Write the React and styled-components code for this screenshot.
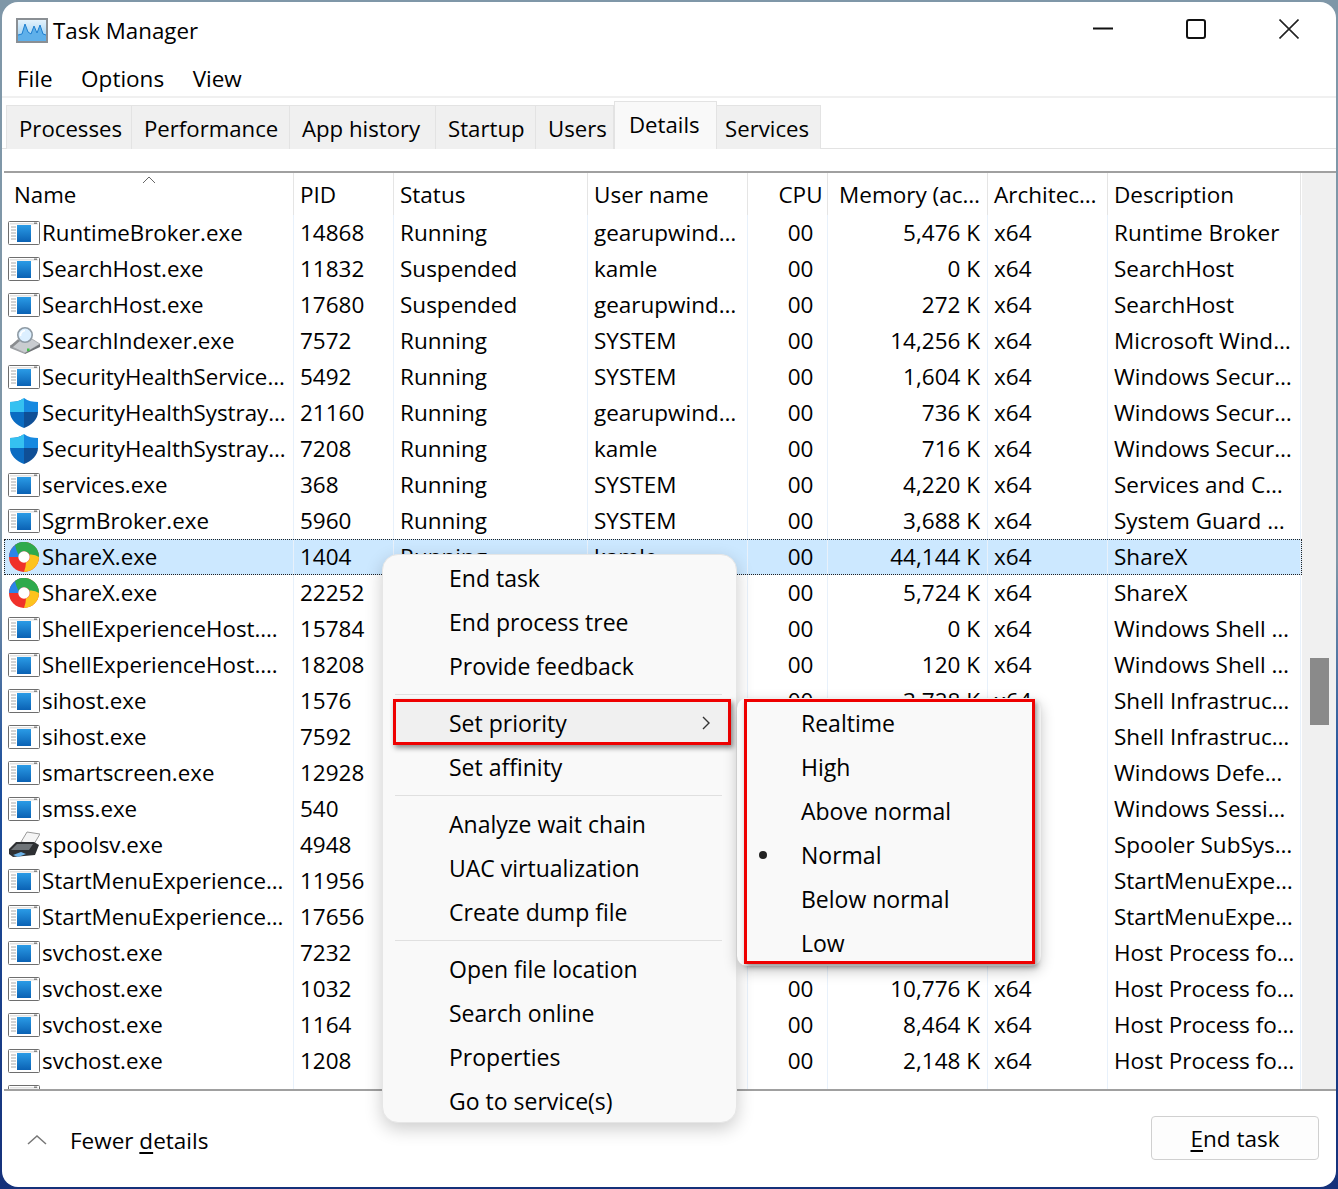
import styled, { createGlobalStyle } from "styled-components";

const GlobalStyle = createGlobalStyle`
  html, body {
    margin: 0;
    padding: 0;
    height: 1189px;
    overflow: hidden;
  }
  body {
    background: linear-gradient(180deg, #7f97a8 0, #7f97a8 560px, #1d4f9c 780px, #15317a 100%);
    font-family: "Open Sans", "Noto Sans", sans-serif;
    font-size: 22.5px;
    color: #000;
  }
  u { text-underline-offset: 3px; }
`;

const Page = styled.div`
  position: relative;
  box-sizing: border-box;
  width: 1338px;
  height: 1189px;
  padding: 2px;
`;

const Window = styled.div`
  display: flex;
  flex-direction: column;
  height: 1185px;
  background: #fff;
  border-radius: 16px;
  overflow: hidden;
`;

const TitleBar = styled.div`
  display: flex;
  align-items: center;
  height: 58px;
  margin-bottom: 2px;
  padding-left: 14px;
  gap: 5px;
  font-size: 22.3px;
`;

const TitleText = styled.span`
  flex: 1;
  padding-bottom: 2px;
`;

const WinControls = styled.div`
  display: flex;
  align-items: center;
  margin-right: 1px;
  padding-bottom: 4px;
`;

const WinButton = styled.div`
  display: flex;
  justify-content: center;
  width: 93px;
`;

const MenuBar = styled.div`
  display: flex;
  height: 36px;
  align-items: center;
  padding: 0 0 2px 15px;
  box-sizing: border-box;
  gap: 28.5px;
  border-bottom: 2px solid #f0f0f0;
`;

const TabStrip = styled.div`
  display: flex;
  align-items: flex-end;
  height: 50px;
  padding-left: 4px;
  border-bottom: 1px solid #e3e3e3;
  font-size: 22.2px;
`;

const Tab = styled.div`
  box-sizing: border-box;
  width: ${(p) => p.$w}px;
  height: ${(p) => (p.$active ? 48 : 44)}px;
  display: flex;
  align-items: center;
  padding: ${(p) => (p.$active ? 0 : 2)}px 0 ${(p) => (p.$active ? 2 : 0)}px ${(p) => p.$pad}px;
  background: ${(p) => (p.$active ? "#f9f9f9" : "#f0f0f0")};
  border: 1px solid #e3e3e3;
  border-left-width: ${(p) => (p.$first || p.$active ? 1 : 0)}px;
  border-bottom: 0;
  margin-bottom: -1px;
  white-space: nowrap;
`;

const Spacer = styled.div`
  height: 22px;
`;

const TableArea = styled.div`
  display: flex;
  height: 916px;
  margin-left: 2px;
  border-top: 2px solid #a0a0a0;
  border-bottom: 2px solid #a0a0a0;
  overflow: hidden;
`;

const List = styled.div`
  width: 1298px;
  flex-shrink: 0;
`;

const COLUMNS = "290px 100px 194px 160px 80px 160px 120px 193px";

const HeaderRow = styled.div`
  position: relative;
  display: grid;
  grid-template-columns: ${COLUMNS};
  height: 42px;
`;

const Row = styled.div`
  display: grid;
  grid-template-columns: ${COLUMNS};
  height: 36px;
  background: ${(p) => (p.$selected ? "#cce8ff" : "transparent")};
  outline: ${(p) => (p.$selected ? "1px dotted #222" : "none")};
  outline-offset: -1px;
`;

const Cell = styled.div`
  display: flex;
  align-items: center;
  box-sizing: border-box;
  padding: 0 ${(p) => p.$right ?? 5}px ${(p) => (p.$head ? 0 : 2)}px ${(p) => p.$left ?? 6}px;
  justify-content: ${(p) =>
    p.$align === "right" ? "flex-end" : p.$align === "center" ? "center" : "flex-start"};
  border-right: 1px solid ${(p) => (p.$head ? "#e5e5e5" : "#e8f1fb")};
  white-space: nowrap;
  overflow: hidden;
`;

const NameCell = styled(Cell)`
  padding-left: ${(p) => (p.$head ? 10 : 4)}px;
  gap: 2px;
  font-size: 22.3px;
`;

const NameIcon = styled.span`
  display: flex;
  width: 32px;
  flex-shrink: 0;
  margin-top: 1px;
`;

const SortMark = styled.svg`
  position: absolute;
  left: 138px;
  top: 3px;
`;

const Track = styled.div`
  flex: 1;
  background: #f0f0f0;
  padding-left: 8px;
`;

const Thumb = styled.div`
  width: 19px;
  height: 67px;
  margin-top: 485px;
  background: #8a8a8a;
`;

const Footer = styled.div`
  flex: 1;
  display: flex;
  align-items: center;
  padding: 0 17px 0 25px;
`;

const Fewer = styled.div`
  flex: 1;
  display: flex;
  align-items: center;
  gap: 23px;
  padding-top: 2px;
`;

const EndButton = styled.div`
  box-sizing: border-box;
  width: 168px;
  height: 44px;
  margin-bottom: 2px;
  display: flex;
  align-items: center;
  justify-content: center;
  background: #fdfdfd;
  border: 1px solid #d0d0d0;
  border-radius: 4px;
`;

const ContextMenu = styled.div`
  position: absolute;
  left: 382px;
  top: 554px;
  box-sizing: border-box;
  width: 355px;
  height: 569px;
  padding-top: 3px;
  background: #f9f9f9;
  border: 1px solid #e6e6e6;
  border-radius: 16px;
  box-shadow: 0 6px 18px rgba(0, 0, 0, 0.2);
  font-size: 23px;
`;

const Item = styled.div`
  display: flex;
  align-items: center;
  box-sizing: border-box;
  height: 44px;
  padding: 0 0 4px 66px;
  white-space: nowrap;
`;

const Sep = styled.div`
  height: 1px;
  margin: 4px 14px 8px 12px;
  background: #e0e0e0;
`;

const PriorityItem = styled.div`
  box-sizing: border-box;
  display: flex;
  align-items: center;
  justify-content: space-between;
  width: 338px;
  height: 46px;
  margin: -4px 0 2px 10px;
  padding: 2px 17px 0 53px;
  background: #f0f0f0;
  border: 3px solid #ee0000;
  box-shadow: 2px 3px 5px rgba(0, 0, 0, 0.45);
`;

const SubMenu = styled.div`
  position: absolute;
  left: 737px;
  top: 698px;
  box-sizing: border-box;
  width: 304px;
  height: 268px;
  padding: 1px 6px 0 7px;
  background: #f9f9f9;
  border-radius: 10px;
  box-shadow: 0 5px 14px rgba(0, 0, 0, 0.22);
  font-size: 23px;
`;

const SubBox = styled.div`
  box-sizing: border-box;
  height: 265px;
  border: 3px solid #ee0000;
  box-shadow: 2px 3px 5px rgba(0, 0, 0, 0.4);
`;

const SubItem = styled.div`
  display: flex;
  align-items: center;
  box-sizing: border-box;
  height: 44px;
  padding: 0 0 2px 12px;
`;

const BulletSlot = styled.div`
  width: 42px;
  display: flex;
`;

const Bullet = styled.div`
  width: 8px;
  height: 8px;
  border-radius: 50%;
  background: #222;
`;

const TaskManagerIcon = () => (
  <svg width="32" height="26" viewBox="0 0 32 26">
    <defs>
      <linearGradient id="tm" x1="0" y1="0" x2="0" y2="1">
        <stop offset="0" stopColor="#e8f4fc" />
        <stop offset="1" stopColor="#8cc8f0" />
      </linearGradient>
    </defs>
    <rect x="1" y="1" width="30" height="23" fill="url(#tm)" stroke="#8a8f94" strokeWidth="2" />
    <path d="M2 17 L6 16 L9 6 L12 14 L15 16 L18 8 L21 15 L24 7 L27 16 L30 17 V23 H2 Z" fill="#5fb0ea" />
    <path d="M2 17 L6 16 L9 6 L12 14 L15 16 L18 8 L21 15 L24 7 L27 16 L30 17" fill="none" stroke="#1e7fd0" strokeWidth="1" />
  </svg>
);

const AppIcon = () => (
  <svg width="32" height="24" viewBox="0 0 32 24">
    <defs>
      <linearGradient id="app" x1="0" y1="0" x2="0" y2="1">
        <stop offset="0" stopColor="#2a9be6" />
        <stop offset="1" stopColor="#0b62b4" />
      </linearGradient>
    </defs>
    <rect x="0.5" y="0.5" width="31" height="23" rx="1" fill="#fff" stroke="#6e6e6e" />
    <rect x="2" y="2" width="28" height="1.5" fill="#e2e2e2" />
    <rect x="26" y="1.5" width="3" height="1.5" fill="#888" />
    <path d="M3 6h5M3 9h5M3 12h5M3 15h5M3 18h5" stroke="#a8a8a8" strokeWidth="1" />
    <rect x="9" y="4" width="14" height="17" fill="url(#app)" />
  </svg>
);

const ShieldIcon = () => (
  <svg width="32" height="30" viewBox="0 0 32 30">
    <path d="M16 0 C12 3 7 4 2 4 V14 C2 21 8 27 16 30 V14 H2" fill="#0b6cc2" />
    <path d="M16 0 C12 3 7 4 2 4 V14 H16 Z" fill="#35c1f1" />
    <path d="M16 0 C20 3 25 4 30 4 V14 H16 Z" fill="#1689e0" />
    <path d="M16 14 H30 C30 21 24 27 16 30 Z" fill="#0f4f96" />
  </svg>
);

const ShareXIcon = () => (
  <svg width="32" height="30" viewBox="0 0 32 30">
    <g transform="translate(1 0)" fill="none" strokeWidth="10">
      <circle cx="15" cy="15" r="15" fill="#f0312a" stroke="none" />
      <path d="M15 0 A15 15 0 0 0 0 15 H9.5 A6 6 0 0 1 15 9 Z" fill="#2b84e8" stroke="none" />
      <path d="M6 3 A15 15 0 0 1 30 15 H21 A6 6 0 0 0 9.5 13 Q7 8 6 3 Z" fill="#2eaa4c" stroke="none" />
      <path d="M30 15 A15 15 0 0 1 15 30 Q17 24 17 20.5 A6 6 0 0 0 20.5 12.5 Q26 12 30 15 Z" fill="#fdc31e" stroke="none" />
      <circle cx="15" cy="15" r="5.7" fill="#fff" stroke="none" />
    </g>
  </svg>
);

const IndexerIcon = () => (
  <svg width="32" height="27" viewBox="0 0 32 27">
    <path d="M2 19 L15 12 H24 L32 17 L17 26 Z" fill="#c9ccd0" stroke="#8d9094" strokeWidth="0.6" />
    <path d="M17 26 L32 17 V20 L17 27 Z" fill="#6f7276" />
    <path d="M2 19 L17 26 V27 L2 21 Z" fill="#9b9ea2" />
    <rect x="19" y="21.5" width="2.5" height="2.6" fill="#43c04a" />
    <path d="M11 13 L3 20" stroke="#8a8c8f" strokeWidth="2.6" />
    <circle cx="17" cy="8" r="7.2" fill="#dcefff" stroke="#8e9aa4" strokeWidth="1.6" />
    <path d="M12.5 9 A5 5 0 0 1 17 3.5" fill="none" stroke="#fff" strokeWidth="1.6" />
  </svg>
);

const PrinterIcon = () => (
  <svg width="32" height="28" viewBox="0 0 32 28">
    <path d="M13 11 L19 1 L32 3 L26 13 Z" fill="#f5f5f5" stroke="#9a9a9a" />
    <path d="M1 18 L8 11 H26 L31 14 L27 24 L5 26 L1 23 Z" fill="#2e3033" />
    <path d="M3 19 L9 13 H25 L21 19 Z" fill="#6f7478" />
    <path d="M5 24 L13 21 L18 23 L10 26 Z" fill="#6db3e8" />
  </svg>
);

const ICONS = {
  app: AppIcon,
  shield: ShieldIcon,
  sharex: ShareXIcon,
  indexer: IndexerIcon,
  printer: PrinterIcon,
};

const hostDesc = "Host Process fo…";

const ROWS = [
  ["app", "RuntimeBroker.exe", "14868", "Running", "gearupwind…", "5,476 K", "Runtime Broker"],
  ["app", "SearchHost.exe", "11832", "Suspended", "kamle", "0 K", "SearchHost"],
  ["app", "SearchHost.exe", "17680", "Suspended", "gearupwind…", "272 K", "SearchHost"],
  ["indexer", "SearchIndexer.exe", "7572", "Running", "SYSTEM", "14,256 K", "Microsoft Wind…"],
  ["app", "SecurityHealthService…", "5492", "Running", "SYSTEM", "1,604 K", "Windows Secur…"],
  ["shield", "SecurityHealthSystray…", "21160", "Running", "gearupwind…", "736 K", "Windows Secur…"],
  ["shield", "SecurityHealthSystray…", "7208", "Running", "kamle", "716 K", "Windows Secur…"],
  ["app", "services.exe", "368", "Running", "SYSTEM", "4,220 K", "Services and C…"],
  ["app", "SgrmBroker.exe", "5960", "Running", "SYSTEM", "3,688 K", "System Guard …"],
  ["sharex", "ShareX.exe", "1404", "Running", "kamle", "44,144 K", "ShareX", true],
  ["sharex", "ShareX.exe", "22252", "Running", "kamle", "5,724 K", "ShareX"],
  ["app", "ShellExperienceHost.…", "15784", "Suspended", "kamle", "0 K", "Windows Shell …"],
  ["app", "ShellExperienceHost.…", "18208", "Suspended", "kamle", "120 K", "Windows Shell …"],
  ["app", "sihost.exe", "1576", "Running", "kamle", "3,728 K", "Shell Infrastruc…"],
  ["app", "sihost.exe", "7592", "Running", "kamle", "3,520 K", "Shell Infrastruc…"],
  ["app", "smartscreen.exe", "12928", "Running", "kamle", "1,204 K", "Windows Defe…"],
  ["app", "smss.exe", "540", "Running", "SYSTEM", "204 K", "Windows Sessi…"],
  ["printer", "spoolsv.exe", "4948", "Running", "SYSTEM", "2,892 K", "Spooler SubSys…"],
  ["app", "StartMenuExperience…", "11956", "Running", "gearupwind…", "9,120 K", "StartMenuExpe…"],
  ["app", "StartMenuExperience…", "17656", "Running", "kamle", "8,740 K", "StartMenuExpe…"],
  ["app", "svchost.exe", "7232", "Running", "SYSTEM", "1,316 K", hostDesc],
  ["app", "svchost.exe", "1032", "Running", "SYSTEM", "10,776 K", hostDesc],
  ["app", "svchost.exe", "1164", "Running", "SYSTEM", "8,464 K", hostDesc],
  ["app", "svchost.exe", "1208", "Running", "SYSTEM", "2,148 K", hostDesc],
  ["app", "svchost.exe", "1256", "Running", "SYSTEM", "996 K", hostDesc],
];

const TABS = [
  ["Processes", 126, 12],
  ["Performance", 158, 12],
  ["App history", 146, 12],
  ["Startup", 100, 12],
  ["Users", 78, 12],
  ["Details", 103, 14],
  ["Services", 104, 8],
];

const MENU_GROUPS = [
  ["End task", "End process tree", "Provide feedback"],
  ["Set priority", "Set affinity"],
  ["Analyze wait chain", "UAC virtualization", "Create dump file"],
  ["Open file location", "Search online", "Properties", "Go to service(s)"],
];

const PRIORITIES = ["Realtime", "High", "Above normal", "Normal", "Below normal", "Low"];

export default function App() {
  return (
    <Page>
      <GlobalStyle />
      <Window>
        <TitleBar>
          <TaskManagerIcon />
          <TitleText>Task Manager</TitleText>
          <WinControls>
            <WinButton>
              <svg width="20" height="20" viewBox="0 0 20 20">
                <path d="M0 9.5H20" stroke="#111" strokeWidth="2" />
              </svg>
            </WinButton>
            <WinButton>
              <svg width="20" height="20" viewBox="0 0 20 20">
                <rect x="1" y="1" width="18" height="18" rx="2" fill="none" stroke="#111" strokeWidth="2" />
              </svg>
            </WinButton>
            <WinButton>
              <svg width="20" height="20" viewBox="0 0 20 20">
                <path d="M0.5 0.5L19.5 19.5M19.5 0.5L0.5 19.5" stroke="#222" strokeWidth="1.6" />
              </svg>
            </WinButton>
          </WinControls>
        </TitleBar>
        <MenuBar>
          <span>File</span>
          <span>Options</span>
          <span>View</span>
        </MenuBar>
        <TabStrip>
          {TABS.map(([label, w, pad], i) => (
            <Tab key={label} $w={w} $pad={pad} $first={i === 0} $active={label === "Details"}>
              {label}
            </Tab>
          ))}
        </TabStrip>
        <Spacer />
        <TableArea>
          <List>
            <HeaderRow>
              <NameCell $head>Name</NameCell>
              <Cell $head>PID</Cell>
              <Cell $head>Status</Cell>
              <Cell $head>User name</Cell>
              <Cell $head $align="center" $left={26} $right={0}>CPU</Cell>
              <Cell $head $align="right" $right={7}>Memory (ac…</Cell>
              <Cell $head>Architec…</Cell>
              <Cell $head>Description</Cell>
              <SortMark width="14" height="8" viewBox="0 0 14 8">
                <path d="M1 7L7 1L13 7" fill="none" stroke="#666" strokeWidth="1" />
              </SortMark>
            </HeaderRow>
            {ROWS.map(([icon, name, pid, status, user, mem, desc, selected], i) => {
              const Icon = ICONS[icon];
              return (
                <Row key={i} $selected={selected}>
                  <NameCell>
                    <NameIcon>
                      <Icon />
                    </NameIcon>
                    {name}
                  </NameCell>
                  <Cell>{pid}</Cell>
                  <Cell>{status}</Cell>
                  <Cell>{user}</Cell>
                  <Cell $align="center" $left={26} $right={0}>00</Cell>
                  <Cell $align="right" $right={7}>{mem}</Cell>
                  <Cell>x64</Cell>
                  <Cell>{desc}</Cell>
                </Row>
              );
            })}
          </List>
          <Track>
            <Thumb />
          </Track>
        </TableArea>
        <Footer>
          <Fewer>
            <svg width="20" height="10" viewBox="0 0 20 10">
              <path d="M1 9L10 1L19 9" fill="none" stroke="#777" strokeWidth="1.5" />
            </svg>
            <span>
              Fewer <u>d</u>etails
            </span>
          </Fewer>
          <EndButton>
            <span>
              <u>E</u>nd task
            </span>
          </EndButton>
        </Footer>
      </Window>
      <ContextMenu>
        {MENU_GROUPS.map((group, g) => (
          <div key={g}>
            {g > 0 && <Sep />}
            {group.map((label) =>
              label === "Set priority" ? (
                <PriorityItem key={label}>
                  {label}
                  <svg width="10" height="16" viewBox="0 0 10 16">
                    <path d="M2 2L8 8L2 14" fill="none" stroke="#333" strokeWidth="1.4" />
                  </svg>
                </PriorityItem>
              ) : (
                <Item key={label}>{label}</Item>
              )
            )}
          </div>
        ))}
      </ContextMenu>
      <SubMenu>
        <SubBox>
          {PRIORITIES.map((label) => (
            <SubItem key={label}>
              <BulletSlot>{label === "Normal" && <Bullet />}</BulletSlot>
              {label}
            </SubItem>
          ))}
        </SubBox>
      </SubMenu>
    </Page>
  );
}
